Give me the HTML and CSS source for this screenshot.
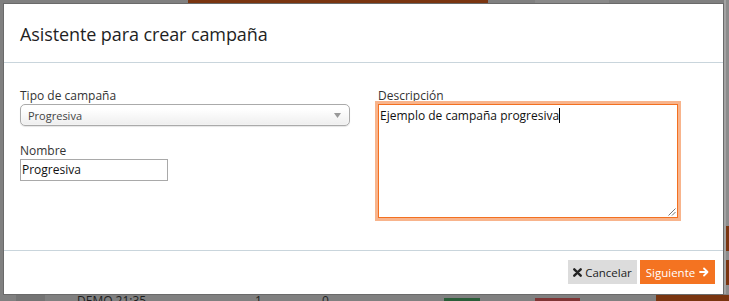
FILE: index.html
```html
<!DOCTYPE html>
<html lang="es">
<head>
<meta charset="utf-8">
<title>Asistente para crear campaña</title>
<link rel="stylesheet" href="styles.css">
</head>
<body>
<div class="backdrop">
  <div class="bg-top-orange"></div>
  <div class="bg-top-light"></div>
  <div class="bg-right-strip">
    <div class="bg-right-orange one"></div>
    <div class="bg-right-orange two"></div>
  </div>
  <div class="bg-bottom">
    <div class="bg-dark-cell"></div>
    <span class="bg-text demo">DEMO 21:35</span>
    <span class="bg-text n1">1</span>
    <span class="bg-text n2">0</span>
    <div class="bg-green"></div>
    <div class="bg-red"></div>
    <div class="bg-orange"></div>
  </div>
</div>

<div class="modal">
  <div class="modal-header">
    <h4 class="modal-title">Asistente para crear campaña</h4>
  </div>
  <div class="modal-body">
    <div class="col">
      <label class="field-label">Tipo de campaña</label>
      <div class="select">
        <span>Progresiva</span>
        <svg class="select-arrow" width="7" height="5" viewBox="0 0 7 5"><path d="M0 0h7L3.5 5z" fill="#999"/></svg>
      </div>
      <label class="field-label second">Nombre</label>
      <div class="input">Progresiva</div>
    </div>
    <div class="col">
      <label class="field-label">Descripción</label>
      <div class="textarea">
        <span>Ejemplo de campaña progresiva</span><span class="caret"></span>
        <svg class="grip" width="9" height="9" viewBox="0 0 9 9"><path d="M8.5 1.5L1.5 8.5M8.5 5L5 8.5" stroke="#777" stroke-width="1"/></svg>
      </div>
    </div>
  </div>
  <div class="modal-footer">
    <button class="btn btn-default">
      <svg class="icon" width="9" height="9" viewBox="0 0 9 9"><path d="M1.3 1.3L7.7 7.7M7.7 1.3L1.3 7.7" stroke="#222" stroke-width="2.4" stroke-linecap="round"/></svg>
      <span>Cancelar</span>
    </button><button class="btn btn-primary">
      <span>Siguiente</span>
      <svg class="icon" width="10" height="10" viewBox="0 0 10 10"><path d="M1 5h7.2M5 1.5L8.5 5 5 8.5" stroke="#fff" stroke-width="1.8" fill="none" stroke-linecap="round" stroke-linejoin="round"/></svg>
    </button>
  </div>
</div>
</body>
</html>
```

FILE: styles.css
```css
* { box-sizing: border-box; }
html, body { margin: 0; padding: 0; }
body {
  width: 729px;
  height: 301px;
  overflow: hidden;
  background: #808080;
  font-family: "Open Sans", "Noto Sans", sans-serif;
  color: #222;
  position: relative;
}

/* page content seen through the dimmed backdrop */
.backdrop { position: absolute; inset: 0; }
.bg-top-orange {
  position: absolute; left: 188px; top: 0; width: 300px; height: 4px;
  background: #7a3510;
}
.bg-top-light {
  position: absolute; left: 535px; top: 0; width: 74px; height: 4px;
  background: #8a8a8a;
}
.bg-right-strip {
  position: absolute; left: 724px; top: 0; width: 5px; height: 301px;
  background: #8c8c8c;
  border-left: 2px solid #a4a4a4;
}
.bg-right-orange { position: absolute; left: 0; width: 5px; background: #7a3510; }
.bg-right-orange.one { top: 226px; height: 25px; }
.bg-right-orange.two { top: 260px; height: 25px; }
.bg-bottom {
  position: absolute; left: 0; top: 294px; width: 729px; height: 7px;
  background: #808080;
}
.bg-dark-cell { position: absolute; left: 16px; top: 1px; width: 29px; height: 6px; background: #747474; }
.bg-text {
  position: absolute; top: 1px; font-size: 12px; line-height: 12px; color: #1e1e1e;
  font-family: "Open Sans", sans-serif;
}
.demo { left: 77px; }
.n1 { left: 255px; }
.n2 { left: 322px; }
.bg-green { position: absolute; left: 444px; top: 4px; width: 36px; height: 3px; background: #2a5d38; }
.bg-red { position: absolute; left: 535px; top: 4px; width: 45px; height: 3px; background: #7f3535; }
.bg-orange { position: absolute; left: 656px; top: 1px; width: 73px; height: 6px; background: #7a3510; }

/* modal */
.modal {
  position: relative;
  margin: 3px 0 0 3px;
  width: 721px;
  height: 292px;
  background: #fff;
  border: 1px solid #6a6a6a;
  display: flex;
  flex-direction: column;
}
.modal-header {
  height: 59px;
  border-bottom: 1px solid #c9d5dc;
  display: flex;
  align-items: center;
  padding: 0 16px;
}
.modal-title {
  margin: 0;
  font-size: 18px;
  font-weight: 400;
  color: #1f1f1f;
  padding-top: 1px;
  letter-spacing: -0.1px;
}
.modal-body {
  flex: 1;
  display: grid;
  grid-template-columns: 330px 300px;
  column-gap: 28px;
  padding: 25px 16px 0;
  border-bottom: 1px solid #c9d5dc;
}
.col { display: flex; flex-direction: column; align-items: flex-start; }
.field-label {
  font-size: 12px;
  line-height: 16px;
  color: #333;
}
.field-label.second { margin-top: 17px; }
.select {
  width: 330px;
  height: 22px;
  border: 1px solid #aaa;
  border-radius: 5px;
  background: linear-gradient(#fff 20%, #eee 100%);
  box-shadow: 0 0 2px #fff inset, 0 1px 1px rgba(0,0,0,.1);
  display: flex;
  align-items: center;
  justify-content: space-between;
  padding: 0 7px 0 7px;
  font-size: 11px;
  color: #444;
}
.select-arrow { margin-right: 1px; }
.input {
  width: 148px;
  height: 22px;
  border: 1px solid #a9a9a9;
  font-size: 12px;
  line-height: 20px;
  padding: 0 1px;
  color: #111;
}
.textarea {
  position: relative;
  width: 300px;
  height: 114px;
  border: 1px solid #f37021;
  box-shadow: 0 0 0 3px #f8b48c;
  padding: 2px 1px;
  font-size: 12px;
  line-height: 18px;
  color: #111;
}
.caret {
  display: inline-block;
  width: 1px;
  height: 15px;
  background: #000;
  vertical-align: -3px;
}
.grip { position: absolute; right: 1px; bottom: 1px; }

.modal-footer {
  height: 43px;
  display: flex;
  justify-content: flex-end;
  align-items: flex-start;
  padding: 9px 8px 0 0;
  gap: 3px;
}
.btn {
  height: 24px;
  border: none;
  font-family: inherit;
  font-size: 11.5px;
  display: flex;
  align-items: center;
  justify-content: center;
  gap: 3px;
  padding: 0;
  cursor: pointer;
}
.btn .icon { flex-shrink: 0; }
.btn-default { background: #dcdcdc; color: #222; width: 69px; }
.btn-primary { background: #f47321; color: #fff; width: 75px; gap: 4px; }
```
